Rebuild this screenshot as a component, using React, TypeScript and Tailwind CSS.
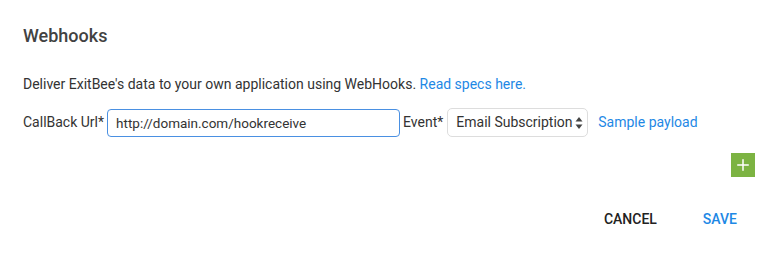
import { Plus } from 'lucide-react';

function App() {
  return (
    <div className="w-[774px] h-[259px] bg-white font-['Roboto',sans-serif] text-[#333]">
      <div className="pl-[23px] pr-[19px] pt-[25px]">
        <h2 className="text-[18px] font-medium leading-[22px] text-[#424242]">Webhooks</h2>

        <p className="mt-[28px] text-[14px] leading-[18px]">
          Deliver ExitBee's data to your own application using WebHooks.{' '}
          <a className="text-[#1e88e5]" href="#">Read specs here.</a>
        </p>

        <div className="mt-[15px] flex items-center text-[14px]">
          <label className="mr-[3px]">CallBack Url*</label>
          <input
            className="w-[293px] h-[28px] px-[8px] rounded-[4px] border border-[#4a90e2] outline-none text-[13.5px] text-[#333]"
            defaultValue="http://domain.com/hookreceive"
          />
          <label className="ml-[3px] mr-[4px]">Event*</label>
          <div className="relative w-[141px] h-[29px] rounded-[5px] border border-[#ddd] flex items-center pl-[8px]">
            <span>Email Subscription</span>
            <svg className="absolute right-[4px] top-[8px]" width="8" height="12" viewBox="0 0 8 12">
              <path d="M4 0 L7.5 4.5 H0.5 Z" fill="#444" />
              <path d="M4 12 L7.5 7.5 H0.5 Z" fill="#444" />
            </svg>
          </div>
          <a className="ml-[10px] text-[#1e88e5]" href="#">Sample payload</a>
        </div>

        <div className="mt-[16px] flex justify-end">
          <button className="w-[24px] h-[24px] bg-[#7cb342] flex items-center justify-center">
            <Plus size={18} strokeWidth={2} color="#fff" />
          </button>
        </div>

        <div className="mt-[32px] flex justify-end items-center gap-[46px] pr-[18px] text-[14px] font-medium">
          <button className="text-[#222]">CANCEL</button>
          <button className="text-[#1e88e5]">SAVE</button>
        </div>
      </div>
    </div>
  );
}

export default App;
